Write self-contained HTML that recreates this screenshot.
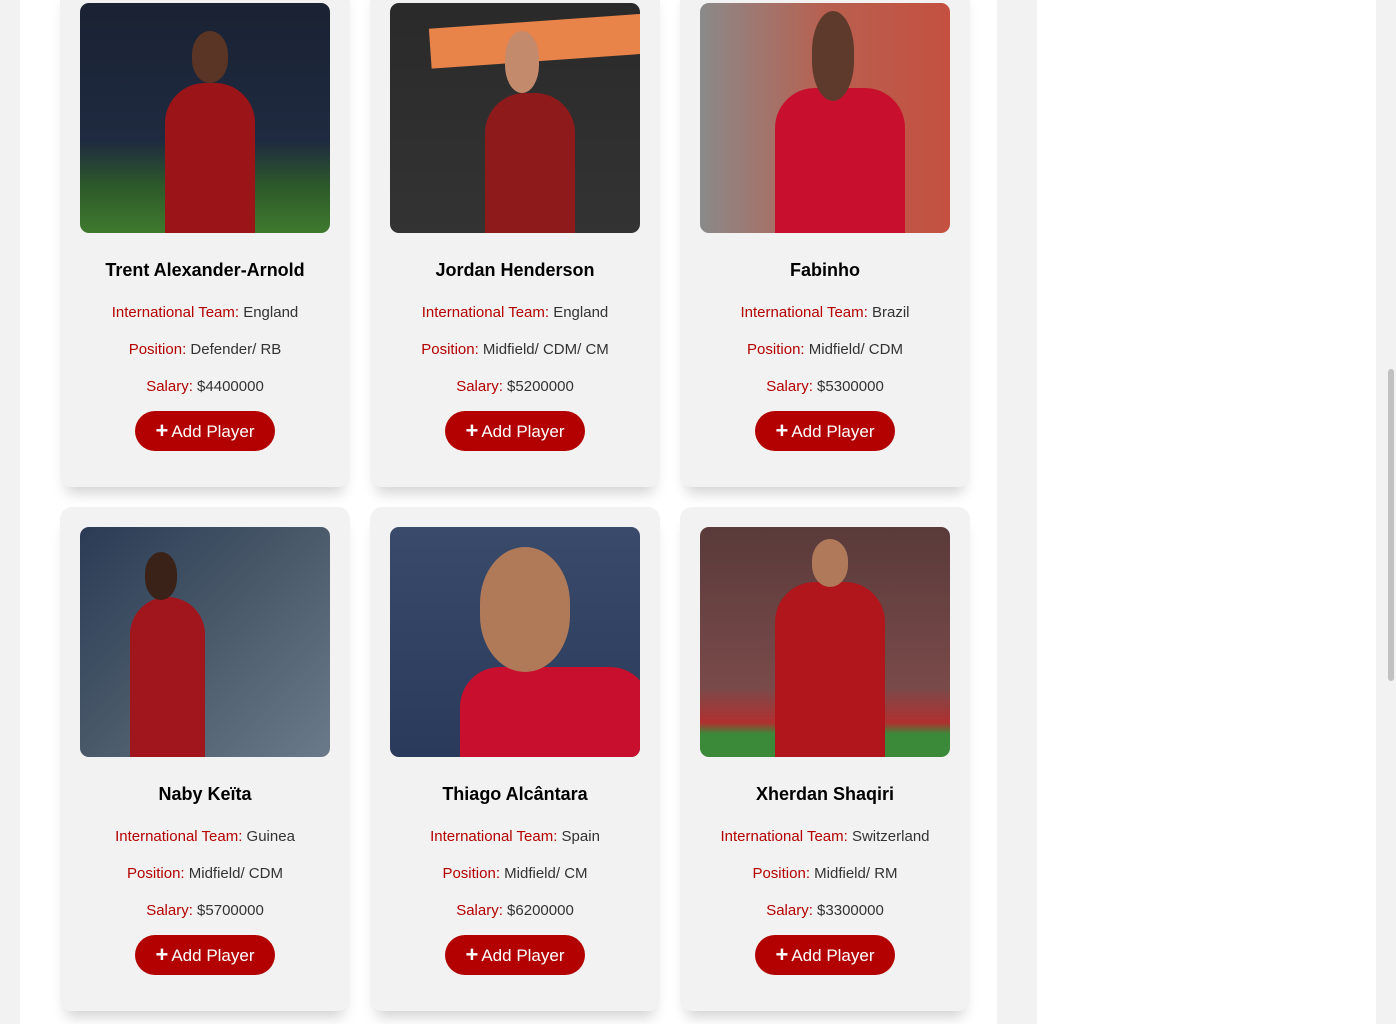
<!DOCTYPE html>
<html><head><meta charset="utf-8"><style>
*{margin:0;padding:0;box-sizing:border-box}
html,body{width:1396px;height:1024px;overflow:hidden;background:#f2f2f2;font-family:"Liberation Sans",sans-serif}
.p1{position:absolute;left:20px;top:0;width:977px;height:1024px;background:#fff}
.p2{position:absolute;left:1037px;top:0;width:339px;height:1024px;background:#fff}
.sb{position:absolute;left:1388px;top:369px;width:6px;height:312px;border-radius:3px;background:#c1c1c1}
.card{position:absolute;width:290px;height:504px;background:#f2f2f2;border-radius:12px;box-shadow:0 12px 14px -6px rgba(0,0,0,.18);text-align:center}
.img{position:absolute;left:20px;top:20px;width:250px;height:230px;border-radius:9px;overflow:hidden}
.head{position:absolute;border-radius:50%/45%}
.body{position:absolute;border-radius:40px 40px 0 0}
.nm{position:absolute;left:0;right:0;top:277px;font-weight:bold;font-size:18px;color:#000}
.ln{position:absolute;left:0;right:0;font-size:15px;color:#333}
.ln b{font-weight:normal;color:#b50000}
.btn{position:absolute;left:75px;top:428px;width:140px;height:40px;border-radius:20px;background:#b30000;color:#fff;font-size:17px;line-height:40px}
.btn span{font-weight:bold;font-size:22px;vertical-align:-1px;margin-right:3px}
</style></head><body>
<div class="p1"></div><div class="p2"></div><div class="sb"></div>

<div class="card" style="left:60px;top:-17px">
<div class="img" style="background:linear-gradient(180deg,#1a2233 0%,#1f2a40 60%,#2d5a2a 80%,#3f7a2e 100%)"><div class="body" style="left:85px;top:80px;width:90px;height:160px;background:#9b1518"></div><div class="head" style="left:112px;top:28px;width:36px;height:52px;background:#5a3424"></div></div>
<div class="nm">Trent Alexander-Arnold</div>
<div class="ln" style="top:321px"><b>International Team:</b> England</div>
<div class="ln" style="top:358px"><b>Position:</b> Defender/ RB</div>
<div class="ln" style="top:395px"><b>Salary:</b> $4400000</div>
<div class="btn"><span>+</span>Add Player</div></div>

<div class="card" style="left:370px;top:-17px">
<div class="img" style="background:linear-gradient(180deg,#2a2a2a 0%,#333 100%)"><div style="position:absolute;left:40px;top:18px;width:220px;height:40px;background:#e8844a;transform:rotate(-4deg)"></div><div class="body" style="left:95px;top:90px;width:90px;height:150px;background:#8e1a1c"></div><div class="head" style="left:115px;top:28px;width:34px;height:62px;background:#c48a6c"></div></div>
<div class="nm">Jordan Henderson</div>
<div class="ln" style="top:321px"><b>International Team:</b> England</div>
<div class="ln" style="top:358px"><b>Position:</b> Midfield/ CDM/ CM</div>
<div class="ln" style="top:395px"><b>Salary:</b> $5200000</div>
<div class="btn"><span>+</span>Add Player</div></div>

<div class="card" style="left:680px;top:-17px">
<div class="img" style="background:linear-gradient(90deg,#8a8a8a 0%,#b86050 50%,#c45040 100%)"><div class="body" style="left:75px;top:85px;width:130px;height:160px;background:#c8102e"></div><div class="head" style="left:112px;top:8px;width:42px;height:90px;background:#5e3a2c"></div></div>
<div class="nm">Fabinho</div>
<div class="ln" style="top:321px"><b>International Team:</b> Brazil</div>
<div class="ln" style="top:358px"><b>Position:</b> Midfield/ CDM</div>
<div class="ln" style="top:395px"><b>Salary:</b> $5300000</div>
<div class="btn"><span>+</span>Add Player</div></div>

<div class="card" style="left:60px;top:507px">
<div class="img" style="background:linear-gradient(135deg,#2b3b55 0%,#4a5a6a 50%,#6a7a8a 100%)"><div class="body" style="left:50px;top:70px;width:75px;height:170px;background:#a0161c"></div><div class="head" style="left:65px;top:25px;width:32px;height:48px;background:#3a2218"></div></div>
<div class="nm">Naby Keïta</div>
<div class="ln" style="top:321px"><b>International Team:</b> Guinea</div>
<div class="ln" style="top:358px"><b>Position:</b> Midfield/ CDM</div>
<div class="ln" style="top:395px"><b>Salary:</b> $5700000</div>
<div class="btn"><span>+</span>Add Player</div></div>

<div class="card" style="left:370px;top:507px">
<div class="img" style="background:linear-gradient(180deg,#3a4a6a 0%,#2a3a5a 100%)"><div class="body" style="left:70px;top:140px;width:190px;height:100px;background:#c8102e"></div><div class="head" style="left:90px;top:20px;width:90px;height:125px;background:#b07a58"></div></div>
<div class="nm">Thiago Alcântara</div>
<div class="ln" style="top:321px"><b>International Team:</b> Spain</div>
<div class="ln" style="top:358px"><b>Position:</b> Midfield/ CM</div>
<div class="ln" style="top:395px"><b>Salary:</b> $6200000</div>
<div class="btn"><span>+</span>Add Player</div></div>

<div class="card" style="left:680px;top:507px">
<div class="img" style="background:linear-gradient(180deg,#5a3a3a 0%,#7a4a4a 70%,#b03030 85%,#3a8a3a 90%,#3a8a3a 100%)"><div class="body" style="left:75px;top:55px;width:110px;height:175px;background:#b0161c"></div><div class="head" style="left:112px;top:12px;width:36px;height:48px;background:#b07a5a"></div></div>
<div class="nm">Xherdan Shaqiri</div>
<div class="ln" style="top:321px"><b>International Team:</b> Switzerland</div>
<div class="ln" style="top:358px"><b>Position:</b> Midfield/ RM</div>
<div class="ln" style="top:395px"><b>Salary:</b> $3300000</div>
<div class="btn"><span>+</span>Add Player</div></div>
</body></html>
